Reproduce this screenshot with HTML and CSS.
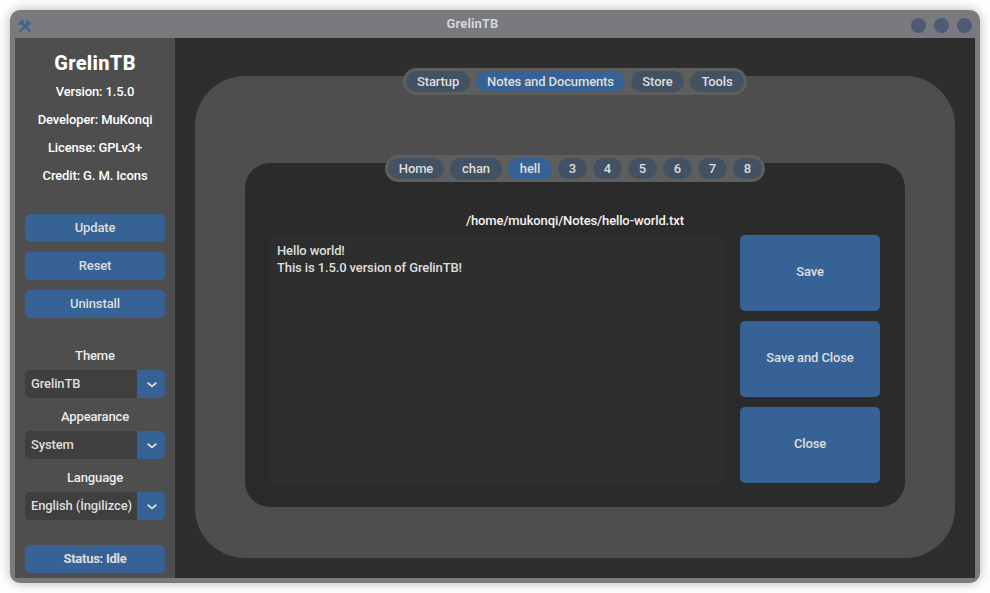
FILE: index.html
```html
<!DOCTYPE html>
<html lang="en">
<head>
<meta charset="utf-8">
<title>GrelinTB</title>
<link rel="stylesheet" href="styles.css">
</head>
<body>
<div class="window">
  <header class="titlebar">
    <svg class="app-icon" viewBox="0 0 14 14" width="14" height="14">
      <path d="M3.4 3.4 11.8 11.9M10.4 3.8 2.2 12" fill="none" stroke="#41628f" stroke-width="2.3" stroke-linecap="round"/>
      <path d="M.4 5.4 1.1 3.2 3.8 1.1 6.6.8 5.2 2.7 5.8 4.4 3.4 6.3 2.3 5.1 1.5 6.1Z" fill="#41628f"/>
      <path d="M11 .7A3.3 3.3 0 0 0 7.9 4.4L9.8 6.3A3.3 3.3 0 0 0 13.7 3L11.8 4.1 10.4 3.8 10.1 2.1Z" fill="#41628f"/>
    </svg>
    <span class="window-title">GrelinTB</span>
    <div class="controls"><i></i><i></i><i></i></div>
  </header>
  <div class="content">
    <aside class="sidebar">
      <h1>GrelinTB</h1>
      <p class="info">Version: 1.5.0</p>
      <p class="info">Developer: MuKonqi</p>
      <p class="info">License: GPLv3+</p>
      <p class="info">Credit: G. M. Icons</p>
      <div class="actions">
        <button>Update</button>
        <button>Reset</button>
        <button>Uninstall</button>
      </div>
      <div class="field"><label>Theme</label>
        <div class="select"><span>GrelinTB</span><b><svg viewBox="0 0 10 6" width="10" height="6"><path d="M1.2 1.2 5 4.4 8.8 1.2"/></svg></b></div></div>
      <div class="field"><label>Appearance</label>
        <div class="select"><span>System</span><b><svg viewBox="0 0 10 6" width="10" height="6"><path d="M1.2 1.2 5 4.4 8.8 1.2"/></svg></b></div></div>
      <div class="field"><label>Language</label>
        <div class="select"><span>English (İngilizce)</span><b><svg viewBox="0 0 10 6" width="10" height="6"><path d="M1.2 1.2 5 4.4 8.8 1.2"/></svg></b></div></div>
      <button class="status">Status: Idle</button>
    </aside>
    <main class="main">
      <section class="panel">
        <nav class="tabs">
          <a class="w-startup">Startup</a><a class="active w-notes">Notes and Documents</a><a class="w-store">Store</a><a class="w-tools">Tools</a>
        </nav>
        <section class="document">
          <nav class="tabs">
            <a class="w-home">Home</a><a class="w-chan">chan</a><a class="active w-hell">hell</a><a class="num">3</a><a class="num">4</a><a class="num">5</a><a class="num">6</a><a class="num">7</a><a class="num">8</a>
          </nav>
          <p class="path">/home/mukonqi/Notes/hello-world.txt</p>
          <div class="editor-row">
            <div class="editor">Hello world!<br>This is 1.5.0 version of GrelinTB!</div>
            <div class="doc-actions">
              <button>Save</button>
              <button>Save and Close</button>
              <button>Close</button>
            </div>
          </div>
        </section>
      </section>
    </main>
  </div>
</div>
</body>
</html>
```
FILE: styles.css
```css
* { box-sizing: border-box; }
body {
  margin: 0;
  padding: 10px;
  height: 593px;
  overflow: hidden;
  background: #fff;
  color: #dedede;
  font: 500 13px/17px Roboto, "Liberation Sans", sans-serif;
  letter-spacing: -0.12px;
}
.window {
  width: 970px;
  height: 573px;
  padding: 0 5px 5px;
  border-radius: 10px;
  background: #797a7f;
  box-shadow: 0 0 12px rgba(0, 0, 0, 0.3);
}
.titlebar {
  display: grid;
  grid-template-columns: 62px 1fr 64px;
  align-items: center;
  height: 28px;
}
.app-icon { margin: 3px 0 0 3px; }
.window-title {
  padding: 0 43px 2px 0;
  text-align: center;
  font-weight: 700;
  letter-spacing: 0.1px;
  color: #d6d6d6;
}
.controls { display: flex; gap: 8px; margin: 3px 0 0; }
.controls i { width: 15px; height: 15px; border-radius: 50%; background: #4c5a73; }
.content { display: flex; height: 540px; background: #2e2e2e; }
.sidebar {
  display: flex;
  flex-direction: column;
  width: 160px;
  padding: 10px 10px 5px;
  background: #4e4e4e;
  text-align: center;
}
h1 {
  margin: 0;
  height: 30px;
  font: 800 20px/30px Roboto, "Liberation Sans", sans-serif;
  letter-spacing: 0.3px;
  color: #fff;
}
.info { margin: 0; height: 28px; line-height: 28px; color: #fff; white-space: nowrap; }
button {
  display: block;
  height: 28px;
  padding: 0 0 1px;
  border: 0;
  border-radius: 5px;
  background: #376296;
  color: #dedede;
  font: inherit;
  letter-spacing: inherit;
}
.actions { display: flex; flex-direction: column; gap: 10px; margin: 24px 0; }
.field { height: 61px; }
.field label { display: block; height: 28px; line-height: 28px; color: #ebebeb; }
.select {
  display: flex;
  height: 28px;
  border-radius: 5px;
  overflow: hidden;
  background: #3f3f3f;
  line-height: 27px;
}
.select span { width: 112px; padding-left: 6px; text-align: left; white-space: nowrap; }
.select b { display: grid; place-items: center; width: 28px; padding-left: 1px; background: #376296; }
.select svg { margin-top: 1px; }
.select path { fill: none; stroke: #dedede; stroke-width: 1.8; stroke-linecap: round; stroke-linejoin: round; }
.status { margin-top: auto; font-weight: 700; letter-spacing: -0.25px; }
.main { flex: 1; padding: 38px 20px 20px; }
.panel {
  height: 482px;
  padding: 0 50px;
  border-radius: 50px;
  background: #4e4e4e;
}
.tabs {
  display: flex;
  gap: 6px;
  width: max-content;
  height: 27px;
  margin: 0 auto;
  padding: 3px;
  border-radius: 14px;
  background: #5e5e5e;
  transform: translateY(-8px);
}
.tabs a {
  height: 21px;
  border-radius: 11px;
  background: #435263;
  line-height: 21px;
  text-align: center;
  white-space: nowrap;
}
.tabs .active { background: #376296; }
.w-startup { width: 64px; }
.w-notes { width: 149px; }
.w-store { width: 53px; }
.w-tools { width: 54px; }
.w-home { width: 56px; }
.tabs .w-chan { width: 52px; height: 22px; }
.tabs .w-hell { width: 44px; height: 22px; }
.num { width: 29px; }
.document {
  height: 344px;
  margin-top: 60px;
  padding: 0 25px;
  border-radius: 25px;
  background: #2b2b2b;
}
.path { margin: 17px 0 0; height: 28px; line-height: 27px; text-align: center; color: #f2f2f2; }
.editor-row { display: flex; justify-content: space-between; }
.editor {
  width: 454px;
  height: 248px;
  padding: 7px;
  border-radius: 5px;
  background: #2e2e2e;
}
.doc-actions { display: grid; gap: 10px; width: 140px; }
.doc-actions button { height: 76px; padding-bottom: 3px; }
```
